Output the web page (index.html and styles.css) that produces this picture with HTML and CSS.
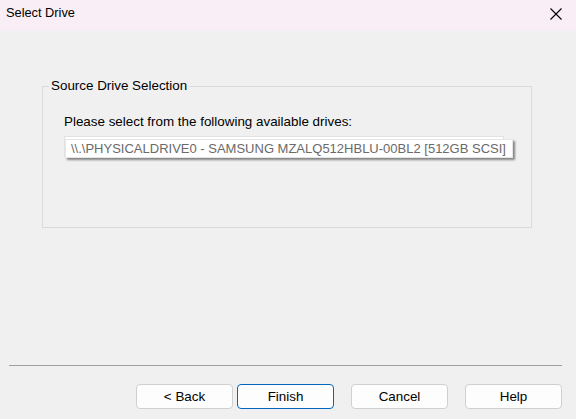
FILE: index.html
```html
<!DOCTYPE html>
<html>
<head>
<meta charset="utf-8">
<title>Select Drive</title>
<link rel="stylesheet" href="styles.css">
</head>
<body>
<div class="window">
  <div class="titlebar">
    <span class="title">Select Drive</span>
    <svg class="close" width="12" height="12" viewBox="0 0 12 12"><path d="M0.5 0.5 L11.5 11.5 M11.5 0.5 L0.5 11.5" stroke="#000" stroke-width="1.1" fill="none"/></svg>
  </div>
  <div class="content">
    <fieldset class="group">
      <legend class="legend">Source Drive Selection</legend>
      <div class="prompt">Please select from the following available drives:</div>
      <div class="listbox">
        <div class="tooltip">\\.\PHYSICALDRIVE0 - SAMSUNG MZALQ512HBLU-00BL2 [512GB SCSI]</div>
      </div>
    </fieldset>
  </div>
  <div class="footer">
    <div class="separator"></div>
    <div class="buttons">
      <button class="btn btn-back">&lt; Back</button>
      <button class="btn btn-default btn-finish">Finish</button>
      <button class="btn btn-cancel">Cancel</button>
      <button class="btn">Help</button>
    </div>
  </div>
</div>
</body>
</html>
```

FILE: styles.css
```css
* { box-sizing: border-box; }
html, body { margin: 0; padding: 0; }
body {
  width: 576px;
  height: 419px;
  overflow: hidden;
  font-family: "Liberation Sans", Arial, sans-serif;
  font-size: 13.4px;
  color: #000;
  background: #f0f0f0;
}
.window {
  height: 419px;
  display: flex;
  flex-direction: column;
  background: #f0f0f0;
}
.titlebar {
  height: 31px;
  flex: none;
  background: #f9eef6;
  display: flex;
  align-items: center;
  justify-content: space-between;
  padding: 0 14px 5px 6px;
}
.title {
  font-size: 12.8px;
  line-height: 16px;
}
.close { display: block; margin-top: 1px; }
.content {
  flex: 1;
  padding-top: 47px;
}
.group {
  margin: 0 0 0 42px;
  padding: 0;
  width: 490px;
  height: 150px;
  border: 1px solid #dadada;
  min-width: 0;
}
.legend {
  margin-left: 6px;
  padding: 0 2px;
  line-height: 16px;
  font-size: 13.4px;
}
.prompt {
  margin: 20px 0 0 21px;
  line-height: 16px;
}
.listbox {
  position: relative;
  margin: 6px 0 0 21px;
  width: 440px;
  height: 21px;
  background: #fff;
  border: 1px solid #e2e2e2;
  border-bottom: none;
}
.tooltip {
  position: absolute;
  left: 0;
  top: 2px;
  width: 448px;
  height: 19px;
  background: #fff;
  border: 1px solid #e6e6e6;
  box-shadow: 2px 2px 2px rgba(0,0,0,0.45);
  color: #6a6a6a;
  padding-left: 5px;
  font-size: 13px;
  line-height: 17px;
  white-space: nowrap;
}
.footer {
  flex: none;
  height: 54px;
}
.separator {
  height: 1px;
  margin: 0 14px 0 9px;
  background: #a0a0a0;
}
.buttons {
  display: flex;
  justify-content: flex-end;
  padding: 18px 14px 0 0;
}
.btn {
  width: 97px;
  height: 25px;
  margin: 0;
  padding: 0;
  font-family: inherit;
  font-size: 13.4px;
  color: #000;
  background: #fdfdfd;
  border: 1px solid #d0d0d0;
  border-radius: 4px;
}
.btn-default { border-color: #0067c0; }
.btn-back { margin-right: 4px; }
.btn-finish, .btn-cancel { margin-right: 17px; }
```
